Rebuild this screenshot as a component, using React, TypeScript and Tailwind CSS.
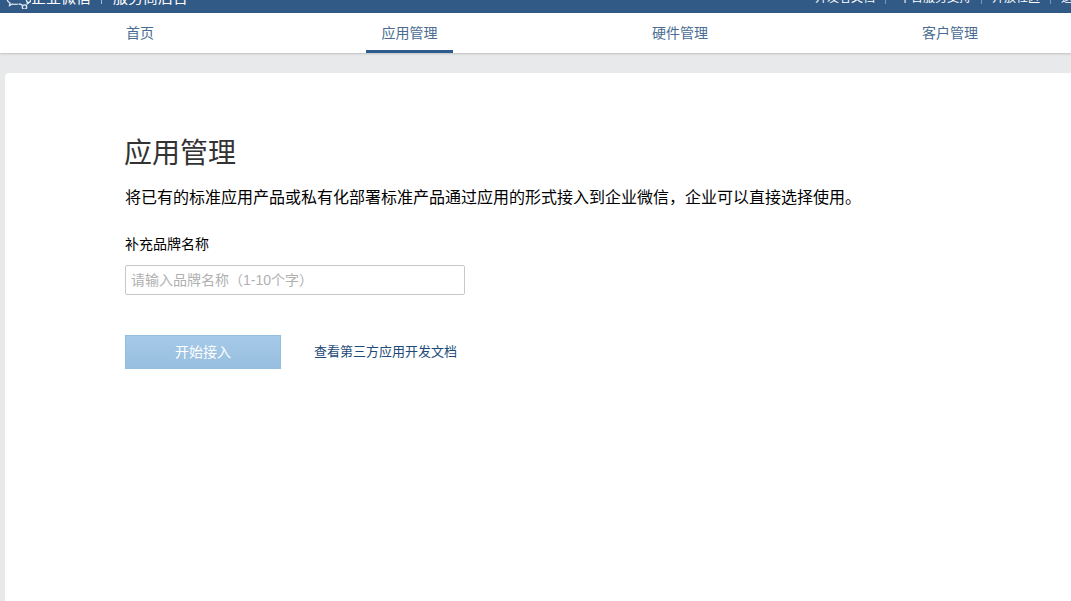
import { useState } from 'react'

const tabs = ['首页', '应用管理', '硬件管理', '客户管理']
const links = ['开发者文档', '平台服务支持', '开放社区', '退出']

function Logo() {
  return (
    <svg width="26" height="22" viewBox="0 0 26 22" fill="none" stroke="#e3eaf2" strokeWidth="1.3" className="shrink-0">
      <path d="M2 11c0 2 1 4 3 5l-.5 2.500 3-1.500c2 .6 4 .6 6 0" />
      <path d="M14 17c1.500 0 2.500.3 3.500 1.500" />
      <circle cx="19.500" cy="20" r="2.200" />
      <path d="M21.500 17.500c1-1 1.500-1.500 2.500-1.500" />
      <circle cx="23.500" cy="13.500" r="2" />
    </svg>
  )
}

export default function App() {
  const [active] = useState(1)

  return (
    <div className="h-[601px] w-[1071px] overflow-hidden bg-[#e8e9eb] font-['Liberation_Sans','Noto_Sans_CJK_SC',sans-serif]">
      <header className="h-[13px] overflow-hidden bg-[#325a87] text-white">
        <div className="-mt-[16px] flex h-[28px] items-center justify-between leading-[28px]">
          <div className="flex items-center pl-[5px] text-[15px]">
            <Logo />
            <span>企业微信</span>
            <span className="mx-[10px] h-[12px] w-px bg-[#a9bccf]" />
            <span className="ml-[1px]">服务商后台</span>
          </div>
          <div className="-mr-[14px] flex items-center text-[12px]">
            {links.map((link, i) => (
              <span key={link} className="flex items-center">
                {i > 0 && (
                  <span
                    className={`ml-[10px] h-[12px] w-px bg-[#7f99b5] ${i === 1 ? 'mr-[13px]' : 'mr-[10px]'}`}
                  />
                )}
                {link}
              </span>
            ))}
          </div>
        </div>
      </header>

      <nav className="h-[40px] bg-white shadow-[0_1px_2px_rgba(0,0,0,0.18)]">
        <ul className="ml-[5px] grid w-[1080px] grid-cols-4">
          {tabs.map((tab, i) => (
            <li key={tab} className="flex justify-center">
              <a
                className={`block h-[40px] w-[87px] text-center text-[14px] leading-[40px] text-[#4a6c92] ${
                  i === active ? '-ml-[1px] border-b-[3px] border-[#2f5c8f]' : ''
                }`}
              >
                {tab}
              </a>
            </li>
          ))}
        </ul>
      </nav>

      <main className="mt-[20px] ml-[5px] h-[600px] rounded-tl-[4px] bg-white pt-[61px] pl-[120px]">
        <h1 className="-ml-[1px] text-[28px] leading-[40px] text-[#333333]">应用管理</h1>
        <p className="mt-[12px] text-[16px] leading-[24px] text-black">
          将已有的标准应用产品或私有化部署标准产品通过应用的形式接入到企业微信，企业可以直接选择使用。
        </p>
        <label className="mt-[24px] block text-[14px] leading-[20px] text-black">补充品牌名称</label>
        <input
          placeholder="请输入品牌名称（1-10个字）"
          className="mt-[11px] block h-[30px] w-[340px] rounded-[2px] border border-[#c8c8c8] px-[5px] text-[14px] outline-none placeholder:text-[#b0b0b0]"
        />
        <div className="mt-[40px] flex items-center">
          <button className="h-[34px] w-[156px] border border-[#92bfe0] bg-gradient-to-b from-[#a5c9e9] to-[#98bfdf] text-[14px] text-white">
            开始接入
          </button>
          <a className="ml-[33px] text-[13px] text-[#1d4a78]">查看第三方应用开发文档</a>
        </div>
      </main>
    </div>
  )
}
